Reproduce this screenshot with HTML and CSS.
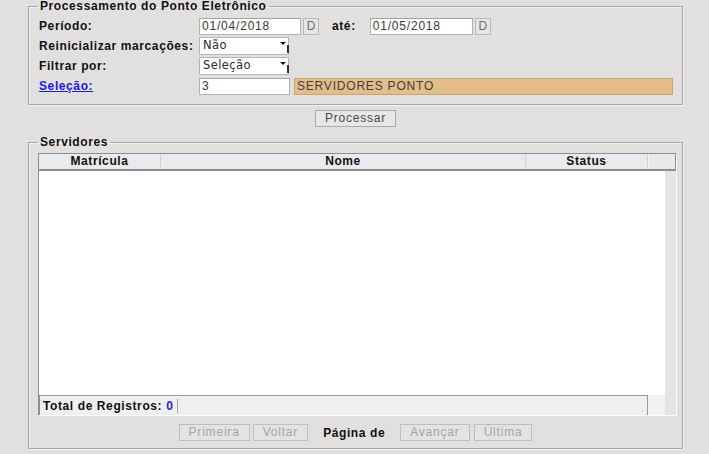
FILE: index.html
```html
<!DOCTYPE html>
<html lang="pt-BR">
<head>
<meta charset="utf-8">
<title>Processamento do Ponto Eletrônico</title>
<link rel="stylesheet" href="styles.css">
</head>
<body>
  <fieldset class="box">
    <legend>Processamento do Ponto Eletrônico</legend>
    <div class="proc-body">
      <div class="row">
        <span class="lbl">Período:</span>
        <span class="field date">01/04/2018</span><span class="dbtn">D</span>
        <span class="lbl-ate">até:</span>
        <span class="field date2">01/05/2018</span><span class="dbtn">D</span>
      </div>
      <div class="row">
        <span class="lbl">Reinicializar marcações:</span>
        <span class="sel">Não</span>
      </div>
      <div class="row">
        <span class="lbl">Filtrar por:</span>
        <span class="sel">Seleção</span>
      </div>
      <div class="row">
        <span class="lbl"><a class="link" href="#">Seleção:</a></span>
        <span class="field code">3</span>
        <span class="desc">SERVIDORES PONTO</span>
      </div>
    </div>
  </fieldset>

  <div class="actions">
    <span class="btn">Processar</span>
  </div>

  <fieldset class="box box2">
    <legend>Servidores</legend>
    <div class="grid">
      <div class="ghead">
        <span class="hc c-mat">Matrícula</span>
        <span class="hc c-nome">Nome</span>
        <span class="hc c-status">Status</span>
        <span class="hc c-end"></span>
      </div>
      <div class="gmid">
        <div class="gmain">
          <div class="gbody"></div>
          <div class="gfootrow">
            <div class="gfoot"><span class="total">Total de Registros: <span class="num">0</span></span></div>
            <div class="gfill"></div>
          </div>
        </div>
        <div class="gscroll"></div>
      </div>
    </div>
    <div class="pager">
      <span class="btn off">Primeira</span>
      <span class="btn off gap3">Voltar</span>
      <span class="pg">Página de</span>
      <span class="btn off">Avançar</span>
      <span class="btn off gap4">Última</span>
    </div>
  </fieldset>
</body>
</html>
```

FILE: styles.css
```css
* { box-sizing: border-box; }
html, body { margin: 0; padding: 0; }
body {
  background: #e1e0df;
  font-family: "Liberation Sans", Arial, sans-serif;
  font-size: 12px;
  color: #111;
  width: 709px;
  height: 454px;
  overflow: hidden;
}

.box {
  margin: 0 0 0 28px;
  width: 655px;
  padding: 0;
  min-width: 0;
  border: 1px solid #a7a7a7;
  box-shadow: inset 1px 1px 0 #f3f3f3, 1px 1px 0 #f3f3f3;
}
.box legend {
  margin-left: 9px;
  padding: 0 2px;
  font-weight: bold;
  font-size: 12px;
  line-height: 13px;
  letter-spacing: .6px;
  color: #111;
}

.proc-body { padding: 3px 0 8px 10px; }
.row { display: flex; align-items: center; height: 20px; }
.lbl {
  flex: none;
  width: 160px;
  font-weight: bold;
  letter-spacing: .6px;
  color: #111;
}
.lbl-ate {
  font-weight: bold;
  letter-spacing: .6px;
  margin: 0 14px 0 13px;
}
.link { color: #1c1cd4; text-decoration: underline; }

.field {
  display: block;
  height: 17px;
  border: 1px solid #b2b2b2;
  border-top-color: #a2a2a2;
  background: #fff;
  color: #3a3a3a;
  padding-left: 2px;
  line-height: 15px;
  letter-spacing: .8px;
}
.date { width: 102px; }
.date2 { width: 103px; }
.code { width: 91px; }
.dbtn {
  display: block;
  width: 16px;
  height: 17px;
  margin-left: 2px;
  border: 1px solid #b9b9b9;
  background: #e5e5e5;
  color: #6f6f6f;
  text-align: center;
  line-height: 15px;
}
.sel {
  position: relative;
  display: block;
  width: 90px;
  height: 18px;
  border: 1px solid #b5b5b5;
  background: #fff;
  color: #2a2a2a;
  padding-left: 3px;
  line-height: 15px;
  letter-spacing: .4px;
  font-family: "DejaVu Sans", "Liberation Sans", sans-serif;
  font-size: 11.5px;
}
.sel::before {
  content: "";
  position: absolute;
  right: 2px;
  top: 4px;
  border-left: 3px solid transparent;
  border-right: 3px solid transparent;
  border-top: 3px solid #111;
}
.sel::after {
  content: "";
  position: absolute;
  right: -1px;
  top: 7px;
  bottom: 1px;
  width: 2px;
  background: #333;
}
.desc {
  display: block;
  margin-left: 4px;
  width: 379px;
  height: 17px;
  background: #e3bd8a;
  border: 1px solid #c7a575;
  color: #3f3f3f;
  padding-left: 2px;
  line-height: 15px;
  letter-spacing: .8px;
}

.actions {
  margin: 5px 0 0 28px;
  width: 655px;
  display: flex;
  justify-content: center;
}
.btn {
  display: block;
  height: 17px;
  padding: 0 9px;
  border: 1px solid #aaaaaa;
  background: #e7e7e7;
  color: #4a4a4a;
  line-height: 15px;
  letter-spacing: .8px;
}
.btn.off {
  border-color: #bfbfbf;
  background: #e3e3e3;
  color: #a5a5a5;
}

.box2 { margin-top: 9px; }
.grid {
  margin: 4px 0 0 9px;
  width: 639px;
  height: 263px;
  display: flex;
  flex-direction: column;
  border: 1px solid;
  border-color: #8e8e8e #fbfbfb #fbfbfb #8e8e8e;
}
.ghead {
  flex: none;
  display: flex;
  height: 17px;
  background: #e9eaee;
  border-bottom: 2px solid #8e8e8e;
  border-right: 1px solid #8e8e8e;
}
.hc {
  font-weight: bold;
  letter-spacing: .6px;
  text-align: center;
  line-height: 15px;
  border-right: 1px solid #d2d3d8;
}
.c-mat { width: 122px; }
.c-nome { width: 365px; }
.c-status { width: 122px; }
.c-end { flex: 1; border-right: 0; background: #e8e8e8; border-left: 1px solid #f4f4f4; }

.gmid { flex: 1; display: flex; min-height: 0; }
.gmain { flex: 1; display: flex; flex-direction: column; }
.gbody { flex: 1; background: #fff; }
.gfootrow { flex: none; height: 20px; display: flex; }
.gfoot {
  width: 609px;
  background: #efefef;
  border-top: 1px solid #9a9a9a;
  border-left: 1px solid #8e8e8e;
  border-right: 1px solid #9a9a9a;
  padding-left: 3px;
  display: flex;
  align-items: center;
}
.gfill { flex: 1; background: #f2f2f2; }
.total {
  font-weight: bold;
  letter-spacing: .6px;
  padding-right: 4px;
  border-right: 1px solid #a3a3a3;
  line-height: 14px;
}
.num { color: #2424d6; }
.gscroll { width: 11px; background: #e4e4e4; }

.pager {
  display: flex;
  justify-content: center;
  align-items: center;
  margin-top: 8px;
  padding-bottom: 7px;
}
.gap3 { margin-left: 3px; }
.gap4 { margin-left: 4px; }
.pg {
  font-weight: bold;
  letter-spacing: .6px;
  margin: 0 15px;
  color: #111;
}
```
